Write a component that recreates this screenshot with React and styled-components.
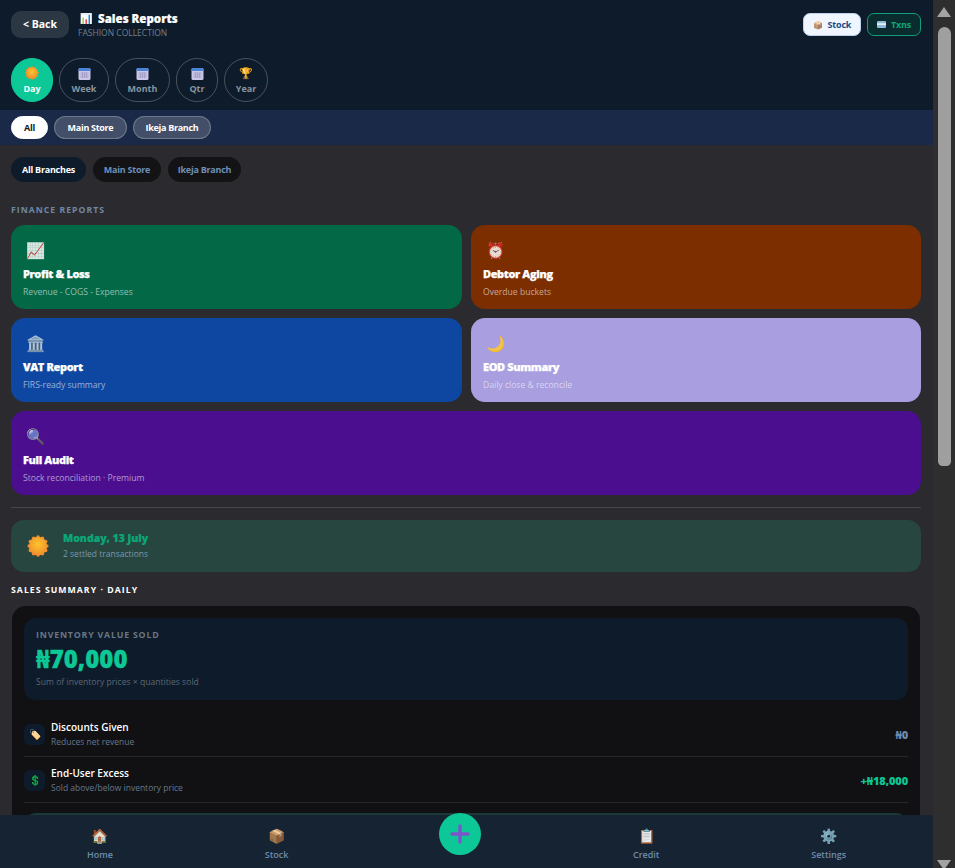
import React from 'react';
import styled, { createGlobalStyle } from 'styled-components';

const GlobalStyle = createGlobalStyle`
  html, body { margin: 0; padding: 0; height: 100%; overflow: hidden; background: #2b2b2f; }
  body { font-family: "Open Sans", "Noto Sans", sans-serif; color: #fff; }
  * { box-sizing: border-box; }
`;

const Shell = styled.div`
  display: flex;
  height: 868px;
  overflow: hidden;
`;
const Page = styled.main`
  position: relative;
  flex: 1;
  min-width: 0;
  overflow: hidden;
  background: #2b2b2f;
`;

/* fake window scrollbar, headless shots hide the real one */
const ScrollTrack = styled.aside`
  width: 22px;
  height: 868px;
  overflow: hidden;
  background: #2e2e2e;
  display: flex;
  flex-direction: column;
  align-items: center;
  padding-top: 7px;
`;
const ScrollThumb = styled.div`
  width: 13px;
  height: 439px;
  margin: 10px 0 394px;
  background: #9f9f9f;
  border-radius: 7px 7px 5px 5px;
  flex-shrink: 0;
`;
const ScrollArrow = styled.svg`
  width: 14px;
  height: 10px;
  flex-shrink: 0;
  fill: #a3a3a3;
`;

const Header = styled.header`
  background: #0d1b2a;
  height: 110px;
  padding: 11px 12px 0 11px;
`;
const TopRow = styled.div`
  display: flex;
  justify-content: space-between;
  align-items: flex-start;
`;
const TitleGroup = styled.div`
  display: flex;
  gap: 9px;
`;
const BackButton = styled.button`
  width: 58px;
  height: 27px;
  padding: 0 0 2px;
  border: 0;
  border-radius: 10px;
  background: #2b3844;
  color: #fff;
  font: 700 10.5px "Open Sans", sans-serif;
`;
const Title = styled.h1`
  margin: 0;
  font-size: 11.5px;
  line-height: 15px;
  font-weight: 800;
  -webkit-text-stroke: 0.2px #fff;
  display: flex;
  align-items: center;
  gap: 6px;
`;
const TitleEmoji = styled.span`
  font-size: 10px;
  margin-left: 2px;
`;
const Subtitle = styled.div`
  font-size: 8.5px;
  line-height: 12px;
  margin-top: 1px;
  color: #74808c;
`;
const HeaderActions = styled.div`
  display: flex;
  gap: 6px;
  padding-top: 2px;
`;
const ActionButton = styled.button`
  display: flex;
  align-items: center;
  justify-content: center;
  gap: 5px;
  height: 23px;
  width: ${p => p.$w}px;
  padding: 0;
  border-radius: 7px;
  border: 1px solid ${p => p.$line};
  background: ${p => p.$bg};
  color: ${p => p.$fg};
  font: 700 9px "Open Sans", sans-serif;
  letter-spacing: -0.2px;
`;
const ActionEmoji = styled.span`
  font-size: 8px;
  opacity: 0.8;
`;
const PeriodRow = styled.div`
  display: flex;
  gap: 6px;
  margin-top: 19px;
`;
const PeriodPill = styled.button`
  width: ${p => p.$w}px;
  height: 44px;
  padding: 7px 0 0;
  border-radius: 22px;
  border: 1px solid ${p => (p.$active ? '#0cc896' : 'rgba(255,255,255,0.24)')};
  background: ${p => (p.$active ? '#0cc896' : 'transparent')};
  color: ${p => (p.$active ? '#fff' : '#89949e')};
  font: 700 9px/12px "Open Sans", sans-serif;
  display: flex;
  flex-direction: column;
  align-items: center;
  gap: 3px;
`;
const PillIcon = styled.span`
  height: 14px;
  font-size: 11px;
  line-height: 14px;
  display: flex;
  align-items: center;
`;

const BranchBar = styled.div`
  height: 35px;
  background: #1a2947;
  display: flex;
  align-items: center;
  gap: 6px;
  padding: 0 11px;
`;
const BranchChip = styled.button`
  width: ${p => p.$w}px;
  height: 23px;
  padding: 0;
  border-radius: 12px;
  border: 1px solid ${p => (p.$active ? '#fff' : 'rgba(255,255,255,0.24)')};
  background: ${p => (p.$active ? '#fff' : 'rgba(255,255,255,0.18)')};
  color: ${p => (p.$active ? '#0d1b2a' : '#fff')};
  font: 700 9px "Open Sans", sans-serif;
  letter-spacing: -0.3px;
`;

const Content = styled.div`
  padding: 12px 12px 0 11px;
`;
const FilterRow = styled.div`
  display: flex;
  gap: 7px;
`;
const FilterChip = styled.button`
  width: ${p => p.$w}px;
  height: 25px;
  padding: 0;
  border: 0;
  border-radius: 13px;
  background: ${p => (p.$active ? '#0d1b2a' : '#131315')};
  color: ${p => (p.$active ? '#fff' : '#6e90b8')};
  font: 700 9px "Open Sans", sans-serif;
  letter-spacing: -0.25px;
`;
const SectionLabel = styled.div`
  margin-top: 22px;
  font-size: 8.7px;
  line-height: 13px;
  font-weight: 700;
  letter-spacing: 1px;
  color: #6f87a3;
`;
const ReportGrid = styled.div`
  display: grid;
  grid-template-columns: 451px 450px;
  gap: 9px;
  margin-top: 8px;
`;
const ReportCard = styled.div`
  height: 84px;
  padding: 14px 12px 0;
  border-radius: 14px;
  background: ${p => p.$bg};
  grid-column: ${p => (p.$full ? '1 / -1' : 'auto')};
`;
const ReportIcon = styled.div`
  font-size: 15.5px;
  line-height: 22px;
  padding-left: 3px;
  opacity: 0.85;
`;
const ReportName = styled.div`
  margin-top: 5px;
  font-size: 11px;
  line-height: 16px;
  font-weight: 800;
  letter-spacing: -0.38px;
  -webkit-text-stroke: 0.25px #fff;
`;
const ReportNote = styled.div`
  margin-top: 4px;
  font-size: 8.6px;
  line-height: 12px;
  color: rgba(255, 255, 255, 0.58);
`;
const Divider = styled.hr`
  margin: 12px 0;
  border: 0;
  height: 1px;
  background: #47474b;
`;
const DayBanner = styled.div`
  height: 52px;
  border-radius: 13px;
  background: #27463f;
  display: flex;
  align-items: center;
  gap: 14px;
  padding: 0 16px;
`;
const DayTitle = styled.div`
  font-size: 10.5px;
  line-height: 15px;
  font-weight: 800;
  color: #0aa878;
  margin-top: -1px;
  -webkit-text-stroke: 0.2px #0aa878;
`;
const DayNote = styled.div`
  margin-top: 2px;
  font-size: 8.5px;
  line-height: 12px;
  color: #7a98ad;
`;
const SummaryLabel = styled.div`
  margin-top: 12px;
  font-size: 8.7px;
  line-height: 13px;
  font-weight: 700;
  letter-spacing: 1.05px;
`;
const SummaryCard = styled.section`
  margin: 9px 1px 0;
  padding: 12px;
  height: 260px;
  border-radius: 14px;
  background: #111113;
`;
const ValueBox = styled.div`
  height: 82px;
  padding: 11px 12px 0;
  margin-bottom: 11px;
  border-radius: 12px;
  background: #0d1b2a;
`;
const ValueLabel = styled.div`
  font-size: 8.8px;
  line-height: 13px;
  font-weight: 700;
  letter-spacing: 0.8px;
  color: #6a7683;
`;
const ValueAmount = styled.div`
  margin-top: 3px;
  font-size: 24px;
  line-height: 28px;
  font-weight: 800;
  color: #0cc896;
  -webkit-text-stroke: 0.3px #0cc896;
`;
const ValueNote = styled.div`
  margin-top: 3px;
  font-size: 8.6px;
  line-height: 12px;
  color: #5c6774;
`;
const SummaryRow = styled.div`
  height: 46px;
  display: flex;
  align-items: center;
  gap: 6px;
  border-bottom: 1px solid #28282b;
  padding-top: 1px;
`;
const RowIcon = styled.div`
  width: 21px;
  height: 21px;
  border-radius: 6px;
  background: #0d1b2a;
  display: flex;
  align-items: center;
  justify-content: center;
  font-size: 10px;
`;
const RowText = styled.div`
  flex: 1;
`;
const RowName = styled.div`
  font-size: 10px;
  line-height: 14px;
  font-weight: 600;
`;
const RowNote = styled.div`
  margin-top: 2px;
  font-size: 8.5px;
  line-height: 12px;
  color: #64788f;
`;
const RowAmount = styled.div`
  font-size: 11px;
  font-weight: 800;
  letter-spacing: -0.1px;
  color: ${p => p.$fg};
`;
const NextBox = styled.div`
  margin-top: 10px;
  height: 60px;
  border-radius: 12px;
  background: #1b3a36;
`;

const BottomNav = styled.nav`
  position: absolute;
  left: 0;
  right: 0;
  bottom: 0;
  height: 53px;
  padding: 0 11px;
  background: #162333;
  display: flex;
  justify-content: space-around;
  align-items: flex-start;
`;
const NavItem = styled.div`
  display: flex;
  flex-direction: column;
  align-items: center;
  padding-top: 12px;
  color: #6f8cac;
  font-size: 9px;
  line-height: 13px;
  font-weight: 600;
`;
const NavEmoji = styled.span`
  font-size: 14px;
  line-height: 17px;
  margin-bottom: 4px;
  opacity: 0.9;
`;
const AddButton = styled.button`
  width: 42px;
  height: 42px;
  margin: -2px 0 0 -1px;
  padding: 0;
  border: 0;
  border-radius: 50%;
  background: #0cc896;
  display: flex;
  align-items: center;
  justify-content: center;
`;

const SunIcon = ({ size = 14 }) => (
  <svg width={size} height={size} viewBox="0 0 24 24">
    <defs>
      <radialGradient id="sunfill" cx="0.5" cy="0.4" r="0.6">
        <stop offset="0" stopColor="#fcc52e" />
        <stop offset="1" stopColor="#f08f2c" />
      </radialGradient>
    </defs>
    {[...Array(12)].map((_, i) => {
      const a = (i * Math.PI) / 6;
      return <circle key={i} cx={12 + 9.6 * Math.cos(a)} cy={12 + 9.6 * Math.sin(a)} r="2" fill="#ee8a30" />;
    })}
    <circle cx="12" cy="12" r="10" fill="url(#sunfill)" />
  </svg>
);

const CalendarIcon = () => (
  <svg width="13" height="13" viewBox="0 0 13 13">
    <rect x="0.5" y="1" width="12" height="12" rx="1.5" fill="#c9c6e6" />
    <path d="M0.5 4V2.5A1.5 1.5 0 0 1 2 1h9a1.5 1.5 0 0 1 1.5 1.5V4z" fill="#4a84d8" />
    <path d="M2.5 6h8M2.5 8h8M2.5 10h8M4.5 5.5v5.5M6.5 5.5v5.5M8.5 5.5v5.5" stroke="#9d98c4" strokeWidth="0.7" />
  </svg>
);

const CardIcon = () => (
  <svg width="9" height="7" viewBox="0 0 9 7">
    <rect width="9" height="7" rx="1" fill="#8dbbd8" />
    <rect y="2.2" width="9" height="1.8" fill="#e4eef4" />
  </svg>
);

const PlusIcon = () => (
  <svg width="20" height="20" viewBox="0 0 20 20">
    <path d="M10 2v16M2 10h16" stroke="#7b55c9" strokeWidth="3.4" strokeLinecap="round" />
  </svg>
);

const periods = [
  { label: 'Day', w: 42, icon: <SunIcon />, active: true },
  { label: 'Week', w: 50, icon: <CalendarIcon /> },
  { label: 'Month', w: 55, icon: <CalendarIcon /> },
  { label: 'Qtr', w: 42, icon: <CalendarIcon /> },
  { label: 'Year', w: 44, icon: '🏆' },
];

const reports = [
  { icon: '📈', name: 'Profit & Loss', note: 'Revenue - COGS - Expenses', bg: '#026845' },
  { icon: '⏰', name: 'Debtor Aging', note: 'Overdue buckets', bg: '#7c2e00' },
  { icon: '🏛️', name: 'VAT Report', note: 'FIRS-ready summary', bg: '#0e47a1' },
  { icon: '🌙', name: 'EOD Summary', note: 'Daily close & reconcile', bg: '#a89ee0' },
  { icon: '🔍', name: 'Full Audit', note: 'Stock reconciliation · Premium', bg: '#4a0e8f', full: true },
];

export default function App() {
  return (
    <Shell>
      <GlobalStyle />
      <Page>
        <Header>
          <TopRow>
            <TitleGroup>
              <BackButton>&lt; Back</BackButton>
              <div>
                <Title><TitleEmoji>📊</TitleEmoji>Sales Reports</Title>
                <Subtitle>FASHION COLLECTION</Subtitle>
              </div>
            </TitleGroup>
            <HeaderActions>
              <ActionButton $w={58} $bg="#eff6ff" $line="#bcd2ea" $fg="#1c4a86">
                <ActionEmoji>📦</ActionEmoji>Stock
              </ActionButton>
              <ActionButton $w={54} $bg="#0b2c2f" $line="#0e9f7a" $fg="#0aa878">
                <CardIcon />Txns
              </ActionButton>
            </HeaderActions>
          </TopRow>
          <PeriodRow>
            {periods.map(p => (
              <PeriodPill key={p.label} $w={p.w} $active={p.active}>
                <PillIcon>{p.icon}</PillIcon>
                {p.label}
              </PeriodPill>
            ))}
          </PeriodRow>
        </Header>
        <BranchBar>
          <BranchChip $w={37} $active>All</BranchChip>
          <BranchChip $w={73}>Main Store</BranchChip>
          <BranchChip $w={78}>Ikeja Branch</BranchChip>
        </BranchBar>
        <Content>
          <FilterRow>
            <FilterChip $w={75} $active>All Branches</FilterChip>
            <FilterChip $w={68}>Main Store</FilterChip>
            <FilterChip $w={73}>Ikeja Branch</FilterChip>
          </FilterRow>
          <SectionLabel>FINANCE REPORTS</SectionLabel>
          <ReportGrid>
            {reports.map(r => (
              <ReportCard key={r.name} $bg={r.bg} $full={r.full}>
                <ReportIcon>{r.icon}</ReportIcon>
                <ReportName>{r.name}</ReportName>
                <ReportNote>{r.note}</ReportNote>
              </ReportCard>
            ))}
          </ReportGrid>
          <Divider />
          <DayBanner>
            <SunIcon size={22} />
            <div>
              <DayTitle>Monday, 13 July</DayTitle>
              <DayNote>2 settled transactions</DayNote>
            </div>
          </DayBanner>
          <SummaryLabel>SALES SUMMARY · DAILY</SummaryLabel>
          <SummaryCard>
            <ValueBox>
              <ValueLabel>INVENTORY VALUE SOLD</ValueLabel>
              <ValueAmount>₦70,000</ValueAmount>
              <ValueNote>Sum of inventory prices × quantities sold</ValueNote>
            </ValueBox>
            <SummaryRow>
              <RowIcon>🏷️</RowIcon>
              <RowText>
                <RowName>Discounts Given</RowName>
                <RowNote>Reduces net revenue</RowNote>
              </RowText>
              <RowAmount $fg="#6a8bb0">₦0</RowAmount>
            </SummaryRow>
            <SummaryRow>
              <RowIcon>💲</RowIcon>
              <RowText>
                <RowName>End-User Excess</RowName>
                <RowNote>Sold above/below inventory price</RowNote>
              </RowText>
              <RowAmount $fg="#0cc896">+₦18,000</RowAmount>
            </SummaryRow>
            <NextBox />
          </SummaryCard>
        </Content>
        <BottomNav>
          <NavItem><NavEmoji>🏠</NavEmoji>Home</NavItem>
          <NavItem><NavEmoji>📦</NavEmoji>Stock</NavItem>
          <AddButton aria-label="Add"><PlusIcon /></AddButton>
          <NavItem><NavEmoji>📋</NavEmoji>Credit</NavItem>
          <NavItem><NavEmoji>⚙️</NavEmoji>Settings</NavItem>
        </BottomNav>
      </Page>
      <ScrollTrack>
        <ScrollArrow viewBox="0 0 14 10"><path d="M7 0l7 10H0z" /></ScrollArrow>
        <ScrollThumb />
        <ScrollArrow viewBox="0 0 14 10"><path d="M0 0h14L7 10z" /></ScrollArrow>
      </ScrollTrack>
    </Shell>
  );
}
